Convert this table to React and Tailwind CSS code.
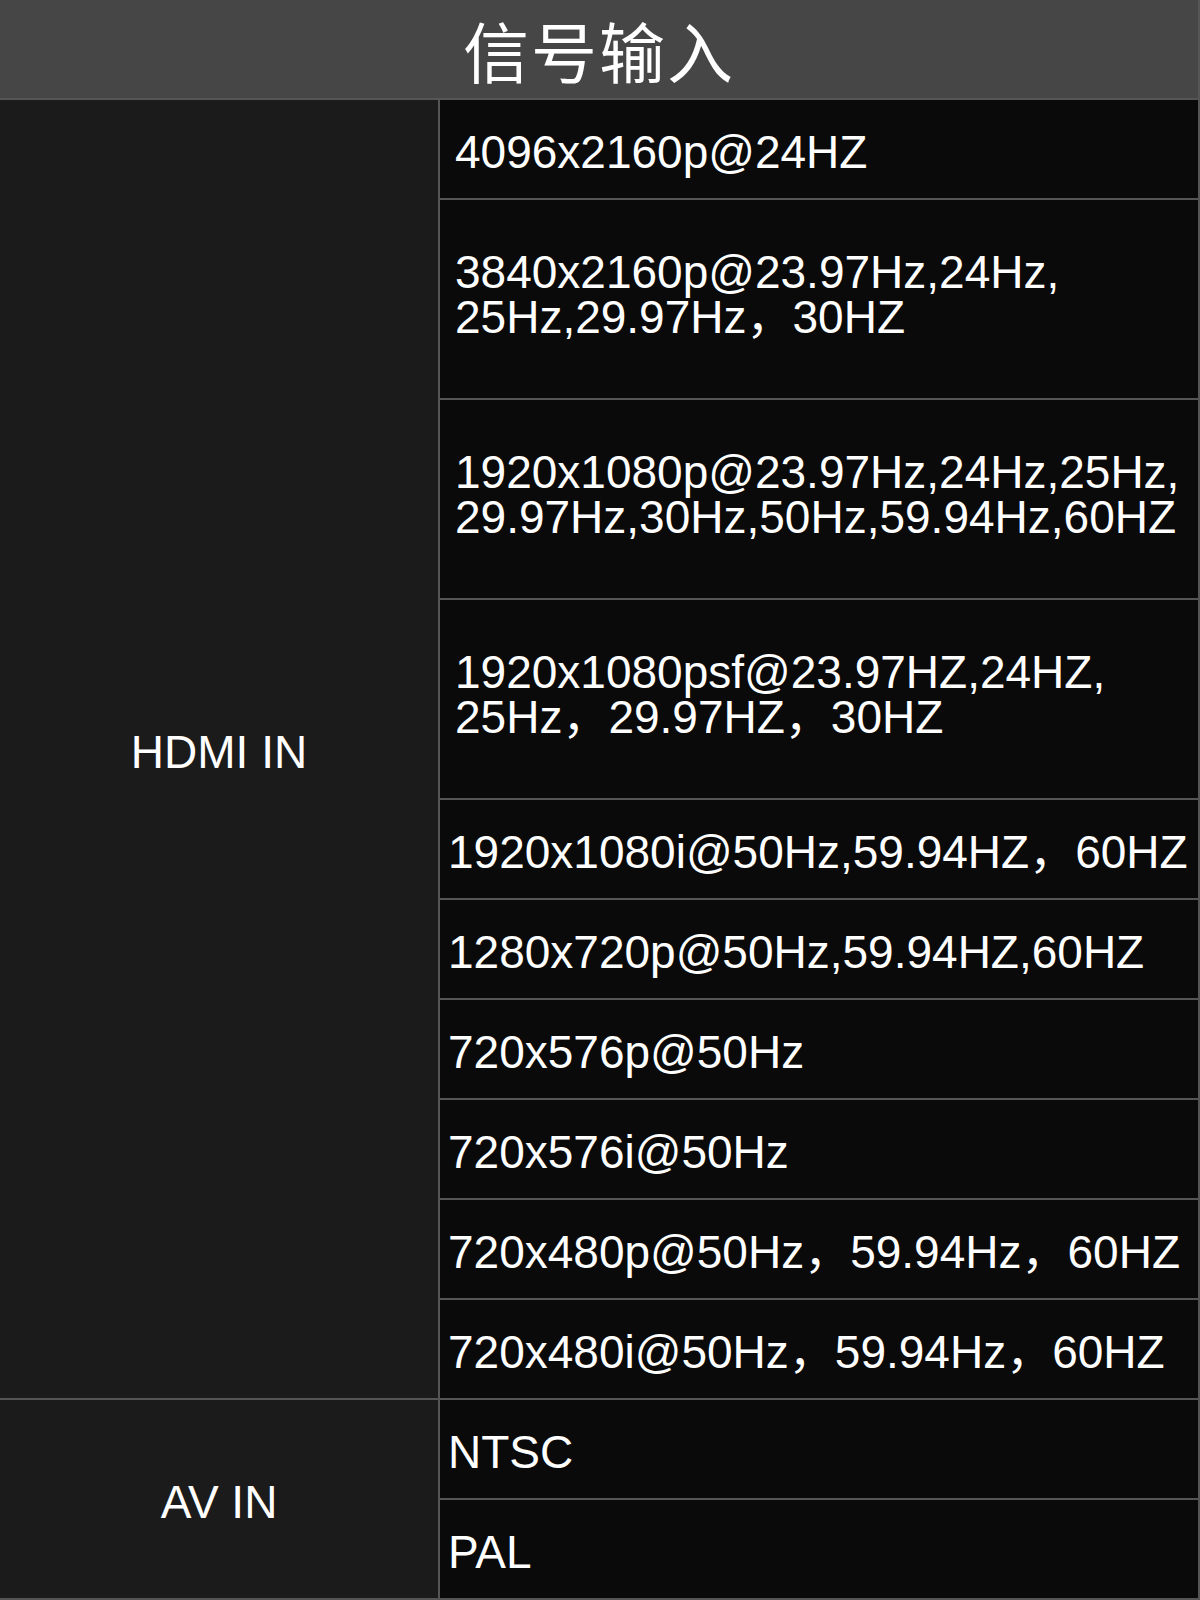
import React from "react";

const hdmiRows = [
  { lines: ["4096x2160p@24HZ"], h: "h-[100px]", pad: "pl-[15px]" },
  { lines: ["3840x2160p@23.97Hz,24Hz,", "25Hz,29.97Hz，30HZ"], h: "h-[200px]", pad: "pl-[15px]" },
  { lines: ["1920x1080p@23.97Hz,24Hz,25Hz,", "29.97Hz,30Hz,50Hz,59.94Hz,60HZ"], h: "h-[200px]", pad: "pl-[15px]" },
  { lines: ["1920x1080psf@23.97HZ,24HZ,", "25Hz，29.97HZ，30HZ"], h: "h-[200px]", pad: "pl-[15px]" },
  { lines: ["1920x1080i@50Hz,59.94HZ，60HZ"], h: "h-[100px]", pad: "pl-2" },
  { lines: ["1280x720p@50Hz,59.94HZ,60HZ"], h: "h-[100px]", pad: "pl-2" },
  { lines: ["720x576p@50Hz"], h: "h-[100px]", pad: "pl-2" },
  { lines: ["720x576i@50Hz"], h: "h-[100px]", pad: "pl-2" },
  { lines: ["720x480p@50Hz，59.94Hz，60HZ"], h: "h-[100px]", pad: "pl-2" },
  { lines: ["720x480i@50Hz，59.94Hz，60HZ"], h: "h-[100px]", pad: "pl-2" },
];

const avRows = [
  { lines: ["NTSC"], h: "h-[100px]", pad: "pl-2" },
  { lines: ["PAL"], h: "h-[100px]", pad: "pl-2" },
];

const Cell = ({ row }) => (
  <div className={`${row.h} ${row.pad} flex items-center border-b-2 border-[#555555] ${row.lines.length > 1 ? "pb-[8px]" : "pt-[7px]"}`}>
    <div className="text-[46px] leading-[45px] text-white whitespace-nowrap">
      {row.lines.map((l, i) => (
        <div key={i}>{l}</div>
      ))}
    </div>
  </div>
);

const Group = ({ label, rows }) => (
  <div className="flex">
    <div className="w-[440px] shrink-0 bg-[#1b1b1b] border-r-2 border-b-2 border-[#555555] flex items-center justify-center pt-[6px] text-[46px] text-white">
      {label}
    </div>
    <div className="flex-1 flex flex-col bg-[#0a0a0a]">
      {rows.map((r, i) => (
        <Cell key={i} row={r} />
      ))}
    </div>
  </div>
);

export default function App() {
  return (
    <div
      className="w-[1200px] h-[1600px] bg-[#0a0a0a] border-r-2 border-[#555555] overflow-hidden"
      style={{ fontFamily: '"Liberation Sans", "Noto Sans CJK SC", sans-serif' }}
    >
      <div className="h-[100px] bg-[#464646] border-b-2 border-[#555555] flex items-center justify-center">
        <h1 className="text-[66px] leading-none text-white font-normal tracking-[2px]" style={{ fontFamily: '"Noto Sans CJK SC", sans-serif' }}>
          信号输入
        </h1>
      </div>
      <Group label="HDMI IN" rows={hdmiRows} />
      <Group label="AV IN" rows={avRows} />
    </div>
  );
}
